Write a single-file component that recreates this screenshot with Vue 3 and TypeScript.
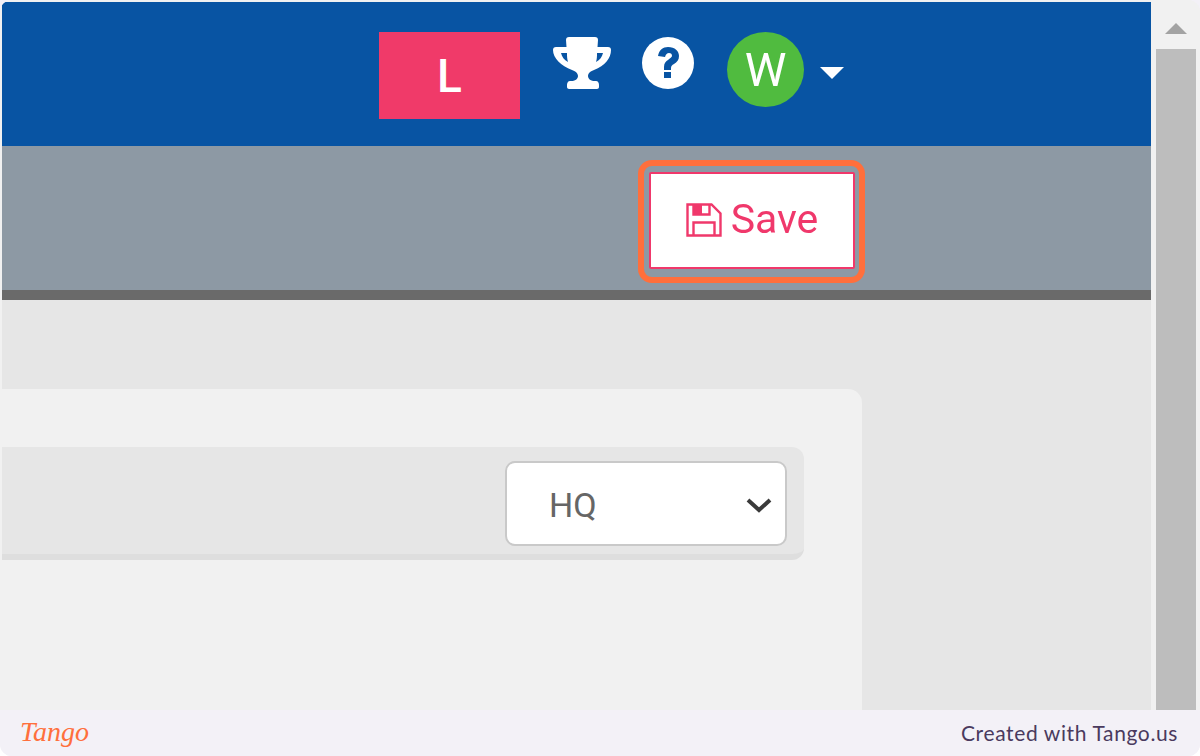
<script setup lang="ts">
const userInitial = 'W'
const orgInitial = 'L'
</script>

<template>
  <div class="frame">
    <div class="viewport">
      <div class="page">
        <header class="topbar">
          <div class="org-tile">{{ orgInitial }}</div>
          <svg class="trophy" viewBox="0 0 58 54" fill="#fff">
            <path
              fill-rule="evenodd"
              d="M16 1h26c2 0 3 1 3 3l-.5 7H55c2 0 3 1 3 3 0 8-6 16-17 20-3 1-6 3-6 6 0 3 3 5 7 5h1c2 0 3 2 3 4v2c0 1-1 2-2 2H16c-1 0-2-1-2-2v-2c0-2 1-4 3-4h1c4 0 7-2 7-5 0-3-3-5-6-6C8 30 0 22 0 14c0-2 1-3 3-3h10.5L13 4c0-2 1-3 3-3zM8 17c1 4 3 7 7 9-1-3-1-6-1-9zM50 17h-6c0 3 0 6-1 9 4-2 6-5 7-9z"
            />
          </svg>
          <svg class="help" viewBox="0 0 52 52">
            <circle cx="26" cy="26" r="26" fill="#fff" />
            <path d="M16 19c1-6 5-9 10-9 7 0 11 4 11 9 0 4-2 6-5 8-2 1-3 2-3 4v2h-7v-3c0-4 2-6 4-7 2-2 4-3 4-4 0-2-1-3-3-3s-3 1-4 4z" fill="#0854a3" />
            <rect x="22" y="35" width="7" height="6" fill="#0854a3" />
          </svg>
          <div class="avatar">{{ userInitial }}</div>
          <span class="caret"></span>
        </header>

        <div class="toolbar">
          <button class="save-btn" type="button">
            <svg class="save-icon" viewBox="0 0 36 34" fill="none" stroke="#f0386b" stroke-width="2.4">
              <path d="M1.5 1.5h24l9 9v22h-33z" />
              <rect x="8" y="2" width="8" height="9" fill="#f0386b" stroke="none" />
              <path d="M7.5 1.5v10h16v-10M7.5 32.5v-13h21v13" />
            </svg>
            <span class="save-label">Save</span>
          </button>
          <div class="highlight"></div>
        </div>

        <main class="content">
          <section class="card">
            <div class="filter-row">
              <div class="select">
                <span>HQ</span>
                <svg class="chevron" viewBox="0 0 26 16" fill="none" stroke="#3a3a3a" stroke-width="4">
                  <path d="M2 3l11 10L24 3" />
                </svg>
              </div>
            </div>
          </section>
        </main>
      </div>

      <aside class="scrollbar">
        <div class="arrow-box"><span class="arrow"></span></div>
        <div class="thumb"></div>
      </aside>
    </div>

    <footer class="footer">
      <span class="logo">Tango</span>
      <span class="credit">Created with Tango.us</span>
    </footer>
  </div>
</template>

<style>
html,
body {
  margin: 0;
  background: #fff;
}
</style>

<style scoped>
.frame {
  width: 1200px;
  height: 756px;
  display: flex;
  flex-direction: column;
  overflow: hidden;
  background: #f3f1f7;
  border-radius: 0 0 12px 12px;
}

.viewport {
  height: 710px;
  display: flex;
  overflow: hidden;
  border-radius: 12px 12px 0 0;
  padding-left: 2px;
  background: #f1f1f1;
}

.page {
  width: 1149px;
  flex-shrink: 0;
  display: flex;
  flex-direction: column;
  padding-top: 2px;
  box-sizing: border-box;
  filter: blur(0.4px);
}

.topbar {
  height: 144px;
  flex-shrink: 0;
  display: flex;
  align-items: flex-start;
  padding-left: 377px;
  box-sizing: border-box;
  background: #0854a3;
}

.org-tile {
  width: 141px;
  height: 87px;
  margin-top: 30px;
  display: flex;
  align-items: center;
  justify-content: center;
  background: #f03a69;
  color: #fff;
  font: 500 46px Roboto, sans-serif;
}

.trophy {
  width: 58px;
  height: 54px;
  margin: 34px 0 0 33px;
}

.help {
  width: 52px;
  height: 52px;
  margin: 35px 0 0 31px;
}

.avatar {
  width: 77px;
  height: 75px;
  margin: 30px 0 0 33px;
  display: flex;
  align-items: center;
  justify-content: center;
  border-radius: 50%;
  background: #50bb3f;
  color: #fff;
  font: 47px Roboto, sans-serif;
}

.caret {
  width: 0;
  height: 0;
  margin: 65px 0 0 16px;
  border-left: 12px solid transparent;
  border-right: 12px solid transparent;
  border-top: 12px solid #fff;
}

.toolbar {
  position: relative;
  height: 154px;
  flex-shrink: 0;
  display: flex;
  align-items: flex-start;
  padding: 26px 0 0 647px;
  box-sizing: border-box;
  background: #8d99a4;
  border-bottom: 10px solid #6a6a6a;
}

.save-btn {
  width: 206px;
  height: 97px;
  display: flex;
  align-items: center;
  justify-content: center;
  gap: 9px;
  padding: 0;
  background: #fff;
  border: 2px solid #f0386b;
  border-radius: 2px;
  color: #f0386b;
  font: 41px Roboto, sans-serif;
}

.save-label {
  margin-top: -3px;
}

.save-icon {
  width: 36px;
  height: 34px;
  margin-top: -2px;
}

.highlight {
  position: absolute;
  left: 636px;
  top: 14px;
  width: 227px;
  height: 123px;
  box-sizing: border-box;
  border: 6px solid #ff6f3c;
  border-radius: 14px;
}

.content {
  flex: 1;
  min-height: 0;
  overflow: hidden;
  padding-top: 89px;
  background: #e6e6e6;
}

.card {
  width: 860px;
  height: 400px;
  padding-top: 58px;
  box-sizing: border-box;
  background: #f1f1f1;
  border-radius: 0 14px 0 0;
}

.filter-row {
  width: 802px;
  height: 113px;
  display: flex;
  justify-content: flex-end;
  padding: 14px 17px 0 0;
  box-sizing: border-box;
  background: #e6e6e6;
  border-bottom: 6px solid #dedede;
  border-radius: 0 12px 12px 0;
}

.select {
  width: 282px;
  height: 85px;
  display: flex;
  align-items: center;
  justify-content: space-between;
  padding: 2px 13px 0 42px;
  box-sizing: border-box;
  background: #fff;
  border: 2px solid #c9c9c9;
  border-radius: 10px;
  color: #666;
  font: 34px Roboto, sans-serif;
}

.chevron {
  width: 26px;
  height: 16px;
}

.scrollbar {
  flex: 1;
  display: flex;
  flex-direction: column;
  align-items: center;
  background: #f1f1f1;
}

.arrow-box {
  height: 49px;
  display: flex;
  align-items: center;
  justify-content: center;
}

.arrow {
  width: 0;
  height: 0;
  margin-top: 8px;
  border-left: 11px solid transparent;
  border-right: 11px solid transparent;
  border-bottom: 11px solid #a3a3a3;
}

.thumb {
  width: 40px;
  flex: 1;
  background: #bdbdbd;
}

.footer {
  height: 46px;
  flex-shrink: 0;
  display: flex;
  align-items: center;
  justify-content: space-between;
  padding: 0 22px 2px 20px;
  box-sizing: border-box;
  background: #f3f1f7;
}

.logo {
  color: #ff6f3c;
  font: italic 28px "Liberation Serif", serif;
}

.credit {
  color: #4a3a5e;
  font: 21px Lato, sans-serif;
  letter-spacing: 0.62px;
}
</style>
